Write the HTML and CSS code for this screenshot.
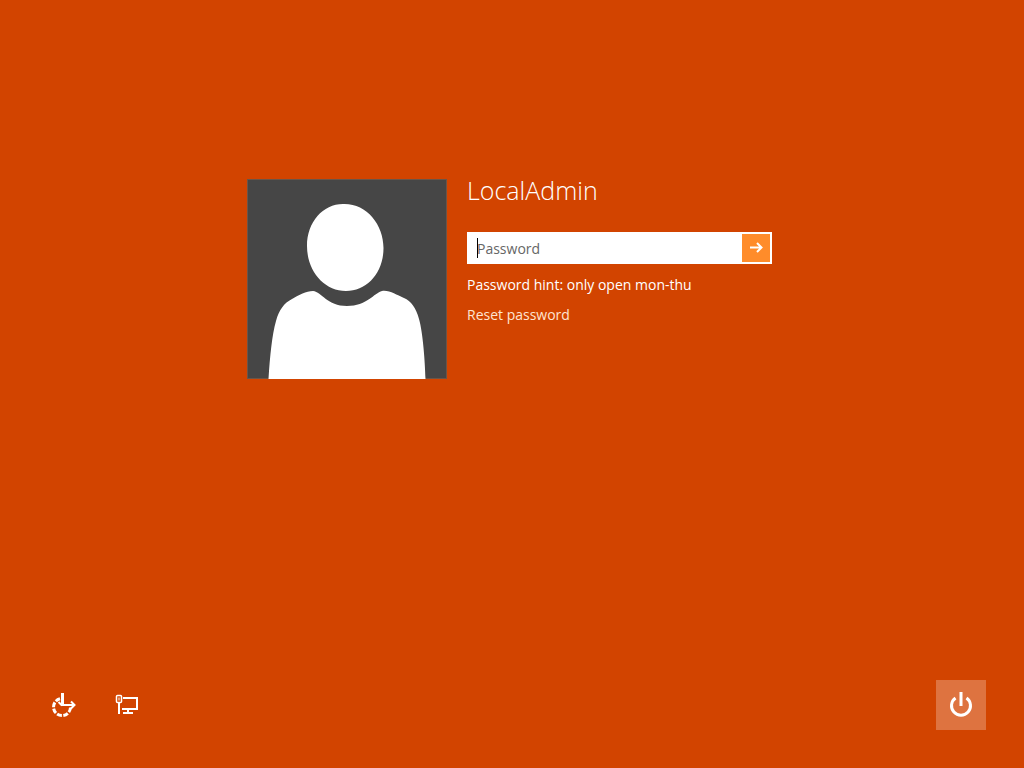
FILE: index.html
```html
<!DOCTYPE html>
<html lang="en">

<head>
    <meta charset="UTF-8">
    <meta name="viewport" content="width=device-width, initial-scale=1.0">
    <title>Sign in</title>
    <link rel="stylesheet" href="styles.css">
</head>

<body>
    <main class="login">
        <svg class="avatar" viewBox="0 0 200 200" role="img" aria-label="User picture">
            <rect width="199" height="199" x="0.5" y="0.5" fill="#464646" stroke="#6b5548" />
            <path fill="#fff" d="M96 25C119 24 136.500 45 136.500 69C136.500 94 120 112 99 112C77 112 60 92 60 67C60 43 76 25 96 25Z" />
            <path fill="#fff" d="M21.500 200C23 177 25 156 29 142C32 131 37 124 45 120C52 116 59 112 66 112C75 113 80 127 100 127C120 127 127 114 135 112C143 111 149 116 157 119C164 122 169 129 172 140C176 154 178 182 178.500 200Z" />
        </svg>

        <form class="login-form" onsubmit="return false">
            <h1 class="user-name">LocalAdmin</h1>
            <div class="password-box">
                <input class="password-input" type="password" placeholder="Password" aria-label="Password">
                <span class="caret"></span>
                <button class="submit-btn" type="submit" aria-label="Submit">
                    <svg width="14" height="12" viewBox="0 0 14 12" fill="none" stroke="#fff" stroke-width="2">
                        <path d="M1 5.500H13M8 1L12.500 5.500L8 10" />
                    </svg>
                </button>
            </div>
            <p class="hint">Password hint: only open mon-thu</p>
            <a class="reset-link" href="#">Reset password</a>
        </form>
    </main>

    <footer class="bottom-bar">
        <div class="tools">
            <button class="icon-btn" type="button" aria-label="Ease of access">
                <svg width="26" height="26" viewBox="0 0 26 26" fill="none" stroke="#fff">
                    <!-- dashed ring, open at the top right -->
                    <path stroke-width="3" stroke-dasharray="5 1.500" d="M20.500 15.500A8.500 8.500 0 1 1 10 6.800" />
                    <path stroke-width="3" d="M12.500 1V14" />
                    <path stroke-width="2" d="M8.500 10L12 13.500M12 13H24M21 9.500L24.500 13L21 16.500" />
                </svg>
            </button>
            <button class="icon-btn" type="button" aria-label="Network">
                <svg width="26" height="26" viewBox="0 0 26 26" fill="none" stroke="#fff" stroke-width="2">
                    <path d="M9 6H23V17H8M14 17V21M9 21H19" />
                    <rect x="2.500" y="3.500" width="5" height="7" rx="1" stroke-width="1.500" />
                    <path d="M5 5.500V8.500" stroke-width="1" />
                    <path d="M5 10V22" />
                </svg>
            </button>
        </div>
        <button class="power-btn" type="button" aria-label="Power">
            <svg width="26" height="28" viewBox="0 0 26 28" fill="none" stroke="#fff" stroke-width="3">
                <path d="M7.500 7A9.500 9.500 0 1 0 18.500 7M13 1V15" />
            </svg>
        </button>
    </footer>
</body>

</html>
```
FILE: styles.css
```css
* {
    box-sizing: border-box;
}

body {
    margin: 0;
    min-height: 100vh;
    display: flex;
    flex-direction: column;
    justify-content: space-between;
    background: #d24400;
    color: #fff;
    font-family: "Segoe UI", "Open Sans", sans-serif;
    font-size: 14px;
}

button {
    display: flex;
    align-items: center;
    justify-content: center;
    padding: 0;
    border: none;
    background: none;
    cursor: pointer;
}

.login {
    display: flex;
    gap: 20px;
    width: 100%;
    max-width: 530px;
    margin: 0 auto;
    padding-top: 179px;
}

.avatar {
    flex: none;
    width: 200px;
    height: 200px;
}

.login-form {
    flex: 1;
    max-width: 305px;
}

.user-name {
    margin: 0 0 31px;
    font-size: 25px;
    font-weight: 300;
    line-height: 22px;
}

.password-box {
    position: relative;
    display: flex;
    height: 32px;
    padding: 2px;
    background: #fff;
}

.password-input {
    flex: 1;
    min-width: 0;
    padding: 0 8px;
    border: none;
    outline: none;
    background: none;
    color: #222;
    font-family: inherit;
    font-size: 14px;
}

.password-input::placeholder {
    color: #666;
    opacity: 1;
}

.caret {
    position: absolute;
    top: 6px;
    left: 10px;
    width: 1px;
    height: 20px;
    background: #000;
}

.submit-btn {
    width: 28px;
    background: #ff8c2a;
}

.hint {
    margin: 11px 0 10px;
    line-height: 20px;
}

.reset-link {
    display: block;
    color: #ffe4d2;
    line-height: 20px;
    text-decoration: none;
}

.bottom-bar {
    display: flex;
    align-items: center;
    justify-content: space-between;
    padding: 0 38px;
    margin-bottom: 38px;
}

.tools {
    display: flex;
    gap: 14px;
}

.icon-btn {
    width: 50px;
    height: 50px;
}

.power-btn {
    width: 50px;
    height: 50px;
    background: #de7340;
}
```
